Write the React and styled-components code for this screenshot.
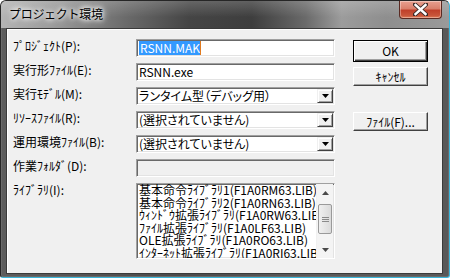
import React from 'react';
import styled, { createGlobalStyle } from 'styled-components';

const GlobalStyle = createGlobalStyle`
  html, body { margin: 0; padding: 0; background: #ffffff; }
  body { font-family: "Noto Sans CJK JP", "Liberation Sans", sans-serif; }
`;

const Window = styled.div`
  width: 450px;
  height: 278px;
  box-sizing: border-box;
  display: flex;
  flex-direction: column;
  border: 1px solid;
  border-color: #262626 #3ab6da #3ab6da #262626;
  border-radius: 6px 6px 3px 3px;
  overflow: hidden;
  background: linear-gradient(90deg, #5c5c5c, #4a4a4a 40%, #5a5a5a 70%, #585858);
  box-shadow: inset 0 0 0 1px #6a6a6a;
`;

const TitleBar = styled.div`
  height: 27px;
  flex: none;
  display: flex;
  align-items: flex-start;
  justify-content: space-between;
  padding: 0 7px 0 8px;
  background:
    linear-gradient(180deg, rgba(255,255,255,0.18), rgba(255,255,255,0) 60%),
    linear-gradient(90deg, #b4b4b4 0%, #9a9a9a 12%, #6a6a6a 28%, #454545 42%, #3e3e3e 56%, #6a6a6a 68%, #9c9c9c 76%, #8e8e8e 86%, #9a9a9a 100%);
`;

const Title = styled.span`
  margin-top: 5px;
  font-size: 12px;
  line-height: 16px;
  color: #000;
  letter-spacing: -0.3px;
  text-shadow: 0 0 4px #fff, 0 0 6px #fff, 0 0 8px rgba(255,255,255,0.8);
`;

const CloseButton = styled.div`
  width: 43px;
  height: 18px;
  box-sizing: border-box;
  display: flex;
  align-items: center;
  justify-content: center;
  border: 1px solid #5a2a22;
  border-top: none;
  border-radius: 0 0 4px 4px;
  background: linear-gradient(180deg, #e8a090 0%, #d9806c 45%, #c0402a 55%, #c8553a 85%, #e07a55 100%);
  box-shadow: inset 0 0 0 1px rgba(255,255,255,0.35);
`;

const Body = styled.div`
  flex: 1;
  display: flex;
  padding: 0 6px 6px 5px;
`;

const Client = styled.div`
  flex: 1;
  display: flex;
  border: 1px solid #3a3a3a;
  background: #f0f0f0;
  box-shadow: inset 1px 1px 0 #ffffff;
  padding: 10px 0 0 6px;
  font-size: 12px;
  font-feature-settings: "palt";
`;

const Form = styled.div`
  display: grid;
  grid-template-columns: 123px 199px;
  grid-auto-rows: 18px;
  row-gap: 6px;
  align-content: start;
`;

const Label = styled.div`
  line-height: 16px;
  margin-top: -1px;
  color: #000;
  white-space: nowrap;
`;

const Sunken = styled.div`
  box-sizing: border-box;
  height: ${p => (p.$tall ? '76px' : '18px')};
  border-style: solid;
  border-width: 1px;
  border-color: #a0a0a0 #ffffff #ffffff #a0a0a0;
  box-shadow: inset 1px 1px 0 #696969, inset -1px -1px 0 #e3e3e3;
  background: ${p => (p.$disabled ? '#f0f0f0' : '#ffffff')};
  display: flex;
  align-items: center;
  padding: 0 1px 0 2px;
  line-height: 14px;
  white-space: nowrap;
  overflow: hidden;
`;

const Selected = styled.span`
  background: #3399ff;
  color: #fff;
  padding: 0 0 0 1px;
  border-right: 1px solid #e07a20;
`;

const ComboText = styled.span`
  flex: 1;
  min-width: 0;
`;

const ArrowButton = styled.div`
  width: 16px;
  height: 14px;
  flex: none;
  box-sizing: border-box;
  border: 1px solid;
  border-color: #f0f0f0 #404040 #404040 #f0f0f0;
  box-shadow: inset 1px 1px 0 #ffffff, inset -1px -1px 0 #a0a0a0;
  background: #f0f0f0;
  display: flex;
  align-items: center;
  justify-content: center;
`;

const ListBox = styled(Sunken)`
  align-items: stretch;
  grid-row: span 4;
`;

const ListItems = styled.div`
  flex: 1;
  min-width: 0;
  overflow: hidden;
  font-size: 12px;
  line-height: 12.5px;
  padding-top: 0;
`;

const Scrollbar = styled.div`
  width: 16px;
  flex: none;
  display: flex;
  flex-direction: column;
  align-items: center;
  background: #f4f4f4;
  border-left: 1px solid #f0f0f0;
`;

const ScrollArrow = styled.div`
  height: 17px;
  width: 16px;
  display: flex;
  align-items: center;
  justify-content: center;
`;

const Thumb = styled.div`
  margin-top: 3px;
  width: 14px;
  height: 30px;
  box-sizing: border-box;
  border: 1px solid #9a9a9a;
  border-radius: 2px;
  background: linear-gradient(90deg, #f0f0f0, #dadada);
  display: flex;
  align-items: center;
  justify-content: center;
`;

const Track = styled.div`
  flex: 1;
`;

const ButtonColumn = styled.div`
  margin-left: 18px;
  padding-top: 1px;
  display: flex;
  flex-direction: column;
  width: 75px;
`;

const Button = styled.div`
  box-sizing: border-box;
  height: ${p => (p.$default ? '22px' : '19px')};
  margin-top: ${p => p.$top || 0}px;
  border: 1px solid;
  border-color: ${p => (p.$default ? '#000' : '#ffffff #404040 #404040 #ffffff')};
  box-shadow: ${p => (p.$default
    ? 'inset 1px 1px 0 #ffffff, inset -1px -1px 0 #404040, inset -2px -2px 0 #a0a0a0'
    : 'inset -1px -1px 0 #a0a0a0')};
  background: #f0f0f0;
  display: flex;
  align-items: center;
  justify-content: center;
  line-height: 14px;
  color: #000;
`;

const Grip = () => (
  <svg width="7" height="7" viewBox="0 0 7 7">
    <path d="M0 1.5h7M0 3.5h7M0 5.5h7" stroke="#8a8a8a" strokeWidth="1" />
  </svg>
);

const Arrow = ({ up, color = '#000' }) => (
  <svg width="7" height="4" viewBox="0 0 7 4">
    <path d={up ? 'M0 4h7L3.5 0z' : 'M0 0h7L3.5 4z'} fill={color} />
  </svg>
);

const CloseGlyph = () => (
  <svg width="15" height="13" viewBox="0 0 15 13">
    <path d="M2 1.5L7.5 6.5M13 1.5L7.5 6.5M2 11.5L7.5 6.5M13 11.5L7.5 6.5" stroke="#3a2a28" strokeWidth="4.2" strokeLinecap="square" />
    <path d="M2.5 2L12.5 11M12.5 2L2.5 11" stroke="#ffffff" strokeWidth="2.4" strokeLinecap="square" />
  </svg>
);

const Combo = ({ children }) => (
  <Sunken>
    <ComboText>{children}</ComboText>
    <ArrowButton><Arrow /></ArrowButton>
  </Sunken>
);

const libraries = [
  '基本命令ﾗｲﾌﾞﾗﾘ1(F1A0RM63.LIB)',
  '基本命令ﾗｲﾌﾞﾗﾘ2(F1A0RN63.LIB)',
  'ｳｨﾝﾄﾞｳ拡張ﾗｲﾌﾞﾗﾘ(F1A0RW63.LIB)',
  'ﾌｧｲﾙ拡張ﾗｲﾌﾞﾗﾘ(F1A0LF63.LIB)',
  'OLE拡張ﾗｲﾌﾞﾗﾘ(F1A0RO63.LIB)',
  'ｲﾝﾀｰﾈｯﾄ拡張ﾗｲﾌﾞﾗﾘ(F1A0RI63.LIB)',
];

export default function App() {
  return (
    <>
      <GlobalStyle />
      <Window>
        <TitleBar>
          <Title>プロジェクト環境</Title>
          <CloseButton><CloseGlyph /></CloseButton>
        </TitleBar>
        <Body>
          <Client>
            <Form>
              <Label>ﾌﾟﾛｼﾞｪｸﾄ(P):</Label>
              <Sunken><Selected>RSNN.MAK</Selected></Sunken>
              <Label>実行形ﾌｧｲﾙ(E):</Label>
              <Sunken>RSNN.exe</Sunken>
              <Label>実行ﾓﾃﾞﾙ(M):</Label>
              <Combo>ランタイム型（デバッグ用）</Combo>
              <Label>ﾘｿｰｽﾌｧｲﾙ(R):</Label>
              <Combo>(選択されていません)</Combo>
              <Label>運用環境ﾌｧｲﾙ(B):</Label>
              <Combo>(選択されていません)</Combo>
              <Label>作業ﾌｫﾙﾀﾞ(D):</Label>
              <Sunken $disabled />
              <Label>ﾗｲﾌﾞﾗﾘ(I):</Label>
              <ListBox $tall>
                <ListItems>
                  {libraries.map(item => <div key={item}>{item}</div>)}
                </ListItems>
                <Scrollbar>
                  <ScrollArrow><Arrow up color="#4a4a4a" /></ScrollArrow>
                  <Thumb><Grip /></Thumb>
                  <Track />
                  <ScrollArrow><Arrow color="#4a4a4a" /></ScrollArrow>
                </Scrollbar>
              </ListBox>
            </Form>
            <ButtonColumn>
              <Button $default>OK</Button>
              <Button $top={5}>ｷｬﾝｾﾙ</Button>
              <Button $top={26}>ﾌｧｲﾙ(F)...</Button>
            </ButtonColumn>
          </Client>
        </Body>
      </Window>
    </>
  );
}
